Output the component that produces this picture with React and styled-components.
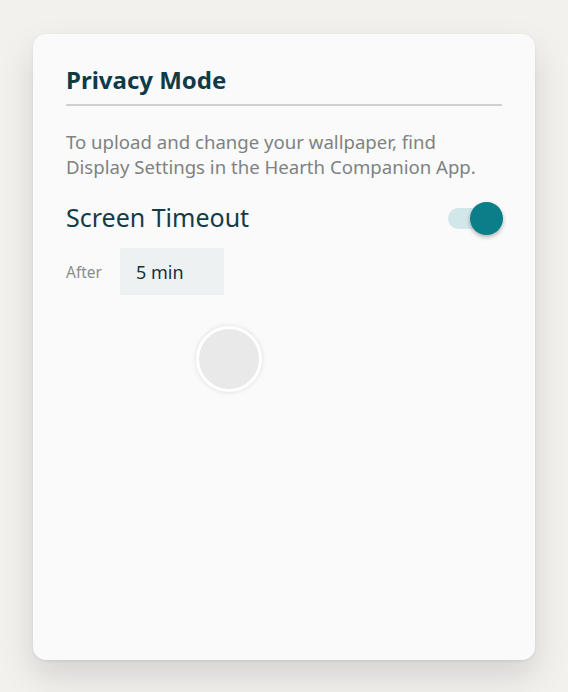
import React from "react";
import styled, { createGlobalStyle } from "styled-components";

const GlobalStyle = createGlobalStyle`
  html, body {
    margin: 0;
    padding: 0;
    background: #f2f1ee;
    font-family: "Noto Sans", "Open Sans", sans-serif;
  }
`;

const Page = styled.div`
  width: 568px;
  height: 692px;
  padding: 34px 33px 0;
  box-sizing: border-box;
`;

const Card = styled.div`
  height: 626px;
  box-sizing: border-box;
  background: #fafafa;
  border-radius: 13px;
  padding: 30px 33px;
  box-shadow: 0 16px 34px rgba(0, 0, 0, 0.13), 0 1px 3px rgba(0, 0, 0, 0.08);
  display: flex;
  flex-direction: column;
`;

const Title = styled.h2`
  margin: 0;
  font-size: 24px;
  font-weight: 700;
  color: #0f3b48;
  line-height: 32px;
  padding-bottom: 8px;
  border-bottom: 2px solid #cfd1d1;
`;

const Description = styled.p`
  margin: 23px 0 0;
  font-size: 18.6px;
  line-height: 25px;
  color: #7e8283;
`;

const SettingRow = styled.div`
  margin-top: 21px;
  height: 34px;
  display: flex;
  align-items: center;
  justify-content: space-between;
`;

const SettingLabel = styled.span`
  font-size: 25px;
  line-height: 34px;
  color: #123c47;
`;

const Toggle = styled.div`
  position: relative;
  width: 42px;
  height: 21px;
  margin-right: 12px;
  margin-top: 3px;
  border-radius: 11px;
  background: ${({ $on }) => ($on ? "#d2e7ea" : "#e0e0e0")};
`;

const Knob = styled.div`
  position: absolute;
  top: -6px;
  left: ${({ $on }) => ($on ? "22px" : "-10px")};
  width: 33px;
  height: 33px;
  border-radius: 50%;
  background: #0a7e89;
  box-shadow: 0 2px 4px rgba(0, 0, 0, 0.3);
`;

const AfterRow = styled.div`
  margin-top: 14px;
  display: flex;
  align-items: center;
  gap: 18px;
`;

const AfterLabel = styled.span`
  font-size: 15.5px;
  color: #8a8c8d;
`;

const ValueBox = styled.div`
  width: 104px;
  height: 47px;
  box-sizing: border-box;
  padding: 0 16px;
  display: flex;
  align-items: center;
  background: #edf1f2;
  font-size: 18px;
  color: #17313a;
`;

const Dot = styled.div`
  margin: 31px 0 0 130px;
  width: 66px;
  height: 66px;
  border-radius: 50%;
  background: #e9e9e9;
  border: 3px solid #ffffff;
  box-sizing: border-box;
  box-shadow: 0 0 5px rgba(0, 0, 0, 0.12);
`;

export default function App() {
  return (
    <>
      <GlobalStyle />
      <Page>
        <Card>
          <Title>Privacy Mode</Title>
          <Description>
            To upload and change your wallpaper, find
            <br />
            Display Settings in the Hearth Companion App.
          </Description>
          <SettingRow>
            <SettingLabel>Screen Timeout</SettingLabel>
            <Toggle $on>
              <Knob $on />
            </Toggle>
          </SettingRow>
          <AfterRow>
            <AfterLabel>After</AfterLabel>
            <ValueBox>5 min</ValueBox>
          </AfterRow>
          <Dot />
        </Card>
      </Page>
    </>
  );
}
